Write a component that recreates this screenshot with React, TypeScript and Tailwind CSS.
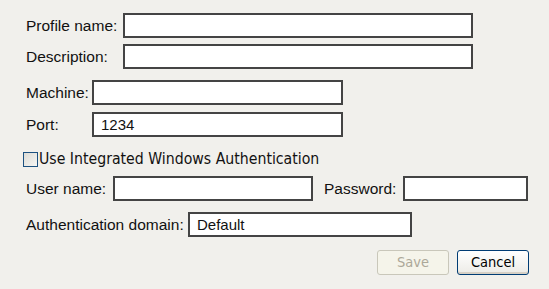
import React from "react";

const label = "text-[15.5px] text-[#111] leading-none whitespace-nowrap";
const box =
  "h-[25px] border-2 border-[#444] bg-white px-[7px] text-[15px] text-[#111] outline-none";

export default function App() {
  return (
    <div
      className="w-[549px] h-[289px] bg-[#f1f0ec] pt-[13px] pl-[26px] overflow-hidden"
      style={{ fontFamily: '"Liberation Sans", Arial, sans-serif' }}
    >
      <div className="flex items-center">
        <span className={`${label} w-[97px]`}>Profile name:</span>
        <input className={`${box} w-[350px]`} defaultValue="" />
      </div>
      <div className="flex items-center mt-[6px]">
        <span className={`${label} w-[97px]`}>Description:</span>
        <input className={`${box} w-[350px]`} defaultValue="" />
      </div>

      <div className="flex items-center mt-[11px]">
        <span className={`${label} w-[66px]`}>Machine:</span>
        <input className={`${box} w-[251px]`} defaultValue="" />
      </div>
      <div className="flex items-center mt-[7px]">
        <span className={`${label} w-[66px]`}>Port:</span>
        <input className={`${box} w-[251px]`} defaultValue="1234" />
      </div>

      <label className="flex items-center mt-[14px] -ml-[3px] h-[16px]">
        <span className="block w-[15px] h-[15px] border border-[#1c5180] bg-gradient-to-br from-[#dcdbd5] to-[#f6f6f4]" />
        <span
          className="ml-px text-[15.7px] text-[#111] leading-none whitespace-nowrap"
          style={{ fontFamily: '"DejaVu Sans Condensed", Tahoma, sans-serif' }}
        >
          Use Integrated Windows Authentication
        </span>
      </label>

      <div className="flex items-center mt-[9px]">
        <span className={`${label} w-[87px]`}>User name:</span>
        <input className={`${box} w-[200px]`} defaultValue="" />
        <span className={`${label} ml-[11px] w-[79px]`}>Password:</span>
        <input className={`${box} w-[125px]`} type="password" defaultValue="" />
      </div>

      <div className="flex items-center mt-[11px]">
        <span className={`${label} w-[162px]`}>Authentication domain:</span>
        <input className={`${box} w-[224px]`} defaultValue="Default" />
      </div>

      <div
        className="flex justify-end gap-[8px] pr-[20px] mt-[13px]"
        style={{ fontFamily: '"DejaVu Sans Condensed", Tahoma, sans-serif' }}
      >
        <button
          disabled
          className="w-[72px] h-[25px] rounded-[3px] border border-[#c9c7ba] bg-[#f5f4ea] text-[14.5px] text-[#aca899]"
        >
          Save
        </button>
        <button className="w-[72px] h-[25px] rounded-[3px] border border-[#003c74] bg-gradient-to-b from-white to-[#ecebe6] text-[14.5px] text-black shadow-[inset_0_-2px_0_#d6d0c5]">
          Cancel
        </button>
      </div>
    </div>
  );
}
